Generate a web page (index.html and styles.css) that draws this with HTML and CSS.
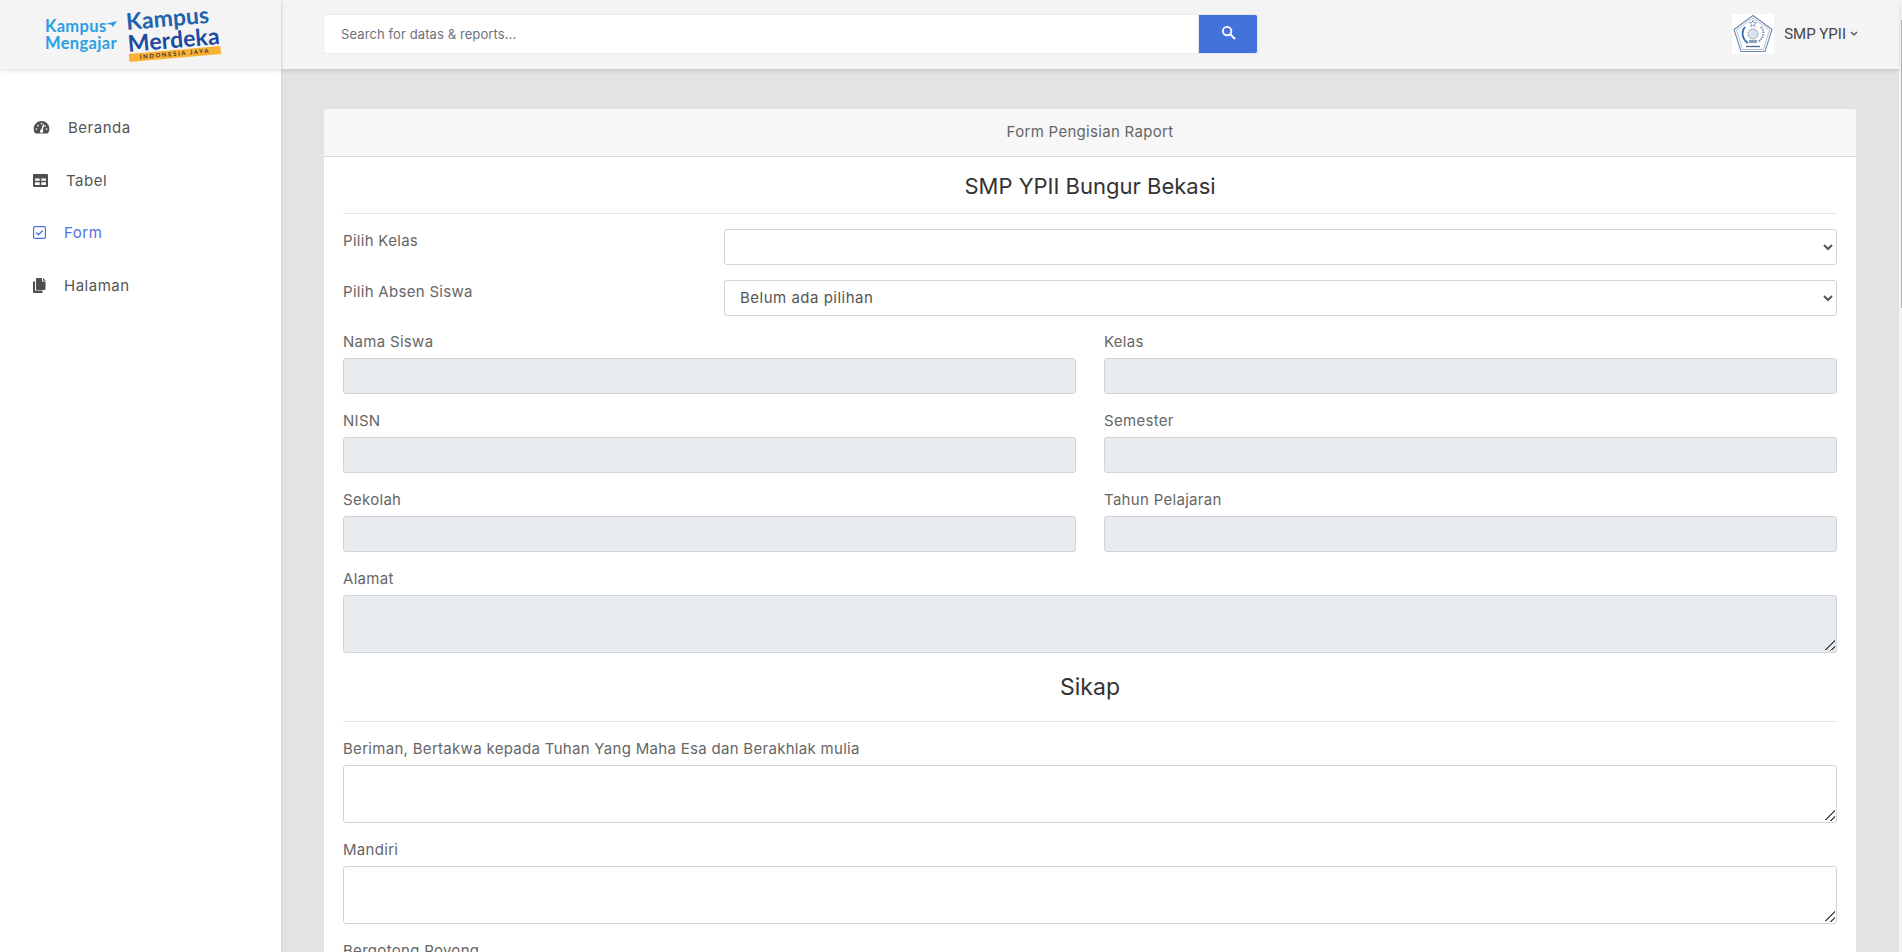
FILE: index.html
```html
<!DOCTYPE html>
<html lang="id">
<head>
<meta charset="utf-8">
<title>Form Pengisian Raport</title>
<link rel="stylesheet" href="styles.css">
</head>
<body>
<div class="app">
  <aside class="sidebar">
    <div class="brand">
      <div class="logo-km">
        <span>Kampus</span>
        <span>Mengajar</span>
        <svg class="plane" viewBox="0 0 12 6" width="12" height="6"><path d="M0 3 12 0 8 6 6 3.6z" fill="#2a9fe4"/></svg>
      </div>
      <div class="logo-merdeka">
        <span class="lm-top">Kampus</span>
        <span class="lm-mid">Merdeka</span>
        <span class="lm-band">INDONESIA JAYA</span>
      </div>
    </div>
    <nav class="nav">
      <a class="nav-item">
        <svg class="ico ico-g" viewBox="0 0 18 16" width="17" height="15"><path fill="#4f4f4f" fill-rule="evenodd" d="M9 1a8.4 8.4 0 0 0-8.4 8.400c0 1.700.5 3.200 1.300 4.500.2.300.5.500.8.500h12.600c.3 0 .6-.2.8-.5.8-1.300 1.300-2.800 1.300-4.500A8.400 8.400 0 0 0 9 1zM9 2.800a.9.9 0 1 1 0 1.800.9.9 0 0 1 0-1.800zM3.600 10.500a.9.9 0 1 1 0-1.800.9.9 0 0 1 0 1.800zm1.600-3.700a.9.9 0 1 1 0-1.800.9.9 0 0 1 0 1.800zm6.600-1.300-1.500 5a1.800 1.800 0 1 1-1.500-.4l1.500-5.100a.8.8 0 0 1 1.500.5zm.2.300a.9.9 0 1 1 1.300 1.200.9.9 0 0 1-1.300-1.200zm2.400 4.700a.9.9 0 1 1 0-1.800.9.9 0 0 1 0 1.800z"/></svg>
        <span>Beranda</span>
      </a>
      <a class="nav-item">
        <svg class="ico ico-t" viewBox="0 0 15 13" width="15" height="13"><path fill="#4f4f4f" fill-rule="evenodd" d="M1 0h13a1 1 0 0 1 1 1v11a1 1 0 0 1-1 1H1a1 1 0 0 1-1-1V1a1 1 0 0 1 1-1zm1 4.500v2.300h4.700V4.500zm6.300 0v2.300H13V4.500zM2 8.300v2.700h4.700V8.300zm6.300 0v2.700H13V8.300z"/></svg>
        <span>Tabel</span>
      </a>
      <a class="nav-item active">
        <svg class="ico ico-f" viewBox="0 0 13 13" width="13" height="13"><rect x=".6" y=".6" width="11.800" height="11.800" rx="1.200" fill="none" stroke="#4e73df" stroke-width="1.200"/><path d="M3.200 6.500 5.500 8.800 9.800 4.500" fill="none" stroke="#4e73df" stroke-width="1.300"/></svg>
        <span>Form</span>
      </a>
      <a class="nav-item">
        <svg class="ico ico-f" viewBox="0 0 13 15" width="13" height="15"><path fill="#4f4f4f" d="M4 0h5v3.500h3.500V11a1 1 0 0 1-1 1H4a1 1 0 0 1-1-1V1a1 1 0 0 1 1-1zM10 0l2.800 2.700H10zM0 3.500h2v9h7.500V15H1a1 1 0 0 1-1-1z"/></svg>
        <span>Halaman</span>
      </a>
    </nav>
  </aside>
  <div class="main">
    <header class="topbar">
      <div class="search">
        <input class="search-input" type="text" placeholder="Search for datas &amp; reports...">
        <button class="search-btn" type="button" aria-label="Cari">
          <svg viewBox="0 0 16 16" width="15" height="15"><circle cx="6.500" cy="6.500" r="4.500" fill="none" stroke="#fff" stroke-width="2"/><path d="M10 10l5 5" stroke="#fff" stroke-width="2.200" fill="none"/></svg>
        </button>
      </div>
      <div class="user">
        <svg class="crest" viewBox="0 0 42 40" width="42" height="40">
          <rect width="42" height="40" fill="#fff"/>
          <path d="M21 1.500 40 15.500 33 37.500H9L2 15.500z" fill="#fff" stroke="#6f88ae" stroke-width="1.100"/>
          <path d="M21 4 37.500 16 31.500 35.500H10.500L4.500 16z" fill="none" stroke="#9fb0cb" stroke-width=".8"/>
          <path d="M21 6l1 2.500h2.500l-2 1.600.8 2.500-2.300-1.500-2.300 1.500.8-2.500-2-1.600H20z" fill="#fff" stroke="#4d6f9f" stroke-width=".6"/>
          <path d="M13 13c-4 5-3 12 3 16" fill="none" stroke="#2f69b5" stroke-width="1.800"/>
          <path d="M29 13c4 5 3 11-3 15" fill="none" stroke="#7d93b5" stroke-width="2.200" stroke-dasharray="1.500 1"/>
          <circle cx="21" cy="20" r="5" fill="#dbe2ec" stroke="#6f88ae" stroke-dasharray="1.500 .8"/>
          <path d="M17 26h8v3h-8z" fill="#8ba0c0"/>
          <path d="M14 32.500h14" stroke="#48699a" stroke-width="1.300"/>
        </svg>
        <span class="user-name">SMP YPII</span>
        <svg class="caret" viewBox="0 0 8 5" width="8" height="5"><path d="M1 1l3 3 3-3" fill="none" stroke="#444" stroke-width="1.200"/></svg>
      </div>
    </header>
    <main class="content">
      <section class="card">
        <div class="card-header">Form Pengisian Raport</div>
        <form class="card-body">
          <h2 class="title">SMP YPII Bungur Bekasi</h2>
          <hr class="rule rule-first">
          <div class="pick-row">
            <label class="label">Pilih Kelas</label>
            <select class="control pick"><option></option></select>
          </div>
          <div class="pick-row">
            <label class="label">Pilih Absen Siswa</label>
            <select class="control pick"><option>Belum ada pilihan</option></select>
          </div>
          <div class="two-col">
            <div class="field"><label class="label">Nama Siswa</label><input class="control" disabled></div>
            <div class="field"><label class="label">Kelas</label><input class="control" disabled></div>
            <div class="field"><label class="label">NISN</label><input class="control" disabled></div>
            <div class="field"><label class="label">Semester</label><input class="control" disabled></div>
            <div class="field"><label class="label">Sekolah</label><input class="control" disabled></div>
            <div class="field"><label class="label">Tahun Pelajaran</label><input class="control" disabled></div>
          </div>
          <div class="field"><label class="label">Alamat</label><textarea class="control area" disabled></textarea></div>
          <h2 class="title title-sub">Sikap</h2>
          <hr class="rule rule-sub">
          <div class="field"><label class="label">Beriman, Bertakwa kepada Tuhan Yang Maha Esa dan Berakhlak mulia</label><textarea class="control area"></textarea></div>
          <div class="field"><label class="label">Mandiri</label><textarea class="control area"></textarea></div>
          <div class="field"><label class="label">Bergotong Royong</label><textarea class="control area"></textarea></div>
        </form>
      </section>
    </main>
  </div>
  <div class="scroll-strip"><div class="scroll-thumb"></div></div>
</div>
</body>
</html>
```
FILE: styles.css
```css
* { box-sizing: border-box; }
html, body { margin: 0; height: 100%; overflow: hidden; }
body {
  font-family: "Inter", "Open Sans", sans-serif;
  font-size: 14px;
  color: #666;
  background: #e3e3e3;
}
.app { display: flex; height: 952px; overflow: hidden; }

.sidebar {
  width: 281px;
  flex: none;
  background: #fff;
  position: relative;
  z-index: 2;
  box-shadow: 1px 0 2px rgba(0,0,0,.08);
}
.brand {
  height: 69px;
  background: #f4f4f4;
  box-shadow: 0 2px 4px rgba(0,0,0,.1);
  display: flex;
  align-items: center;
  padding-left: 45px;
  gap: 10px;
}
.logo-km {
  position: relative;
  display: flex;
  flex-direction: column;
  font-family: "Lato", sans-serif;
  font-weight: 700;
  font-size: 16.5px;
  letter-spacing: .35px;
  line-height: 17px;
  color: #2a9fe4;
}
.plane { position: absolute; right: 0; top: 3px; }
.logo-merdeka {
  display: flex;
  flex-direction: column;
  font-family: "Lato", sans-serif;
  font-weight: 700;
  transform: rotate(-5deg);
  margin-top: -5px;
}
.lm-top { font-size: 23px; line-height: 22px; letter-spacing: .1px; color: #1f63ae; }
.lm-mid { font-size: 23px; line-height: 22px; letter-spacing: .1px; color: #1c4aa0; }
.lm-band {
  font-size: 6px;
  line-height: 8px;
  letter-spacing: 1.6px;
  text-align: center;
  color: #333;
  background: #f9b233;
  white-space: nowrap;
}

.nav { padding-top: 32px; display: flex; flex-direction: column; }
.nav-item {
  height: 52.7px;
  padding-left: 33px;
  display: flex;
  align-items: center;
  font-size: 15px;
  letter-spacing: .5px;
  color: #555;
}
.nav-item.active { color: #4e73df; }
.ico { flex: none; margin-right: 18px; }

.main { flex: 1; min-width: 0; display: flex; flex-direction: column; }
.topbar {
  height: 69px;
  flex: none;
  background: #f4f4f4;
  box-shadow: 0 2px 4px rgba(0,0,0,.12);
  display: flex;
  align-items: center;
  justify-content: space-between;
  padding: 0 41px 2px 42px;
  position: relative;
  z-index: 1;
}
.search { display: flex; width: 935px; height: 40px; }
.search-input {
  flex: 1;
  border: 1px solid #ececec;
  border-right: 0;
  border-radius: 3px 0 0 3px;
  background: #fff;
  padding: 0 17px;
  font: 13px "Inter", sans-serif;
  letter-spacing: .1px;
  color: #666;
  outline: 0;
}
.search-input::placeholder { color: #6e707e; opacity: 1; }
.search-btn {
  width: 60px;
  border: 1px solid #dfe5f3;
  border-radius: 0 3px 3px 0;
  background: #4472dc;
  display: flex;
  align-items: center;
  justify-content: center;
  padding: 0 0 3px;
}
.user { display: flex; align-items: center; }
.crest { display: block; }
.user-name {
  font-family: "Roboto", sans-serif;
  font-size: 15px;
  color: #444;
  margin-left: 10px;
}
.caret { margin-left: 4px; }

.content { flex: 1; min-height: 0; overflow: hidden; padding: 40px 43px 0 43px; }
.card {
  background: #fff;
  border-radius: 4px 4px 0 0;
  box-shadow: 0 1px 2px rgba(0,0,0,.05);
}
.card-header {
  height: 48px;
  background: #f7f7f7;
  border-bottom: 1px solid #d9d9d9;
  display: flex;
  align-items: center;
  justify-content: center;
  font-size: 15px;
  letter-spacing: .3px;
  padding-bottom: 2px;
  color: #666;
  border-radius: 4px 4px 0 0;
}
.card-body { padding: 0 19px; }
.title {
  margin: 0;
  font-size: 22px;
  font-weight: 400;
  color: #333;
  text-align: center;
  line-height: 28px;
  padding-top: 15px;
}
.title-sub { padding-top: 4px; font-size: 23px; }
.rule { border: 0; border-top: 1px solid #e5e5e5; margin: 0; }
.rule-first { margin-top: 13px; margin-bottom: 15px; }
.rule-sub { margin-top: 20px; margin-bottom: 16px; }
.label { display: block; font-size: 15px; letter-spacing: .3px; line-height: 21px; color: #666; }
.control {
  display: block;
  width: 100%;
  height: 36px;
  border: 1px solid #ced4da;
  border-radius: 3px;
  background: #fff;
  color: #555;
  font: 15px "Inter", sans-serif;
  letter-spacing: .5px;
  padding: 0 11px;
  outline: 0;
}
.pick { height: 35.5px; }
.control:disabled { background: #e9ecef; }
.area { height: 58px; padding: 6px 11px; resize: vertical; }
.area::-webkit-resizer {
  background:
    linear-gradient(135deg, transparent 46%, #555 46%, #555 56%, transparent 56%) 4px 3px / 10px 10px no-repeat,
    linear-gradient(135deg, transparent 46%, #555 46%, #555 60%, transparent 60%) 9px 9px / 5px 5px no-repeat;
}
.pick-row {
  display: grid;
  grid-template-columns: 381px 1fr;
  margin-bottom: 15.5px;
  align-items: start;
}
.pick-row .label { padding-top: 1px; }
.two-col {
  display: grid;
  grid-template-columns: 1fr 1fr;
  column-gap: 28px;
}
.field { margin-bottom: 16px; }
.field .label { margin-bottom: 6px; }
.scroll-strip { width: 3px; flex: none; background: #f4f4f4; padding: 20px 0 0 2px; }
.scroll-thumb { height: 288px; background: #b5b5b5; }
```
